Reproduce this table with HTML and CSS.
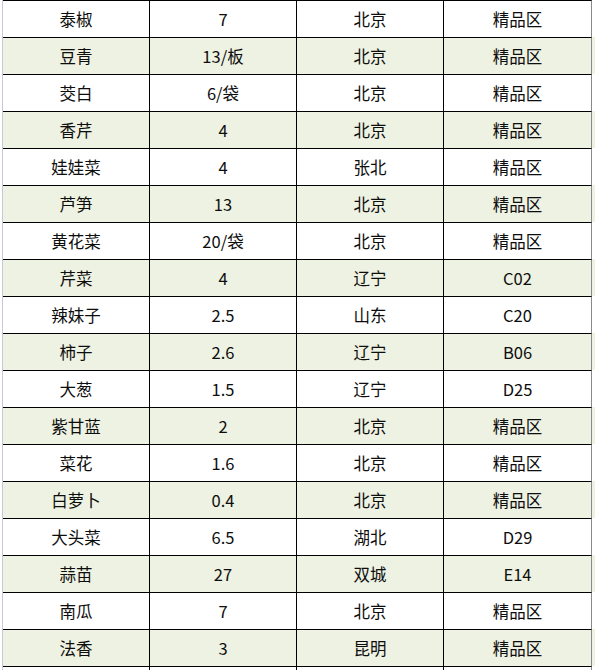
FILE: index.html
```html
<!DOCTYPE html>
<html lang="zh">
<head>
<meta charset="utf-8">
<title>蔬菜价格</title>
<link rel="stylesheet" href="styles.css">
</head>
<body>
<div class="sheet">
  <div class="row"><div class="cell">泰椒</div><div class="cell">7</div><div class="cell">北京</div><div class="cell">精品区</div></div>
  <div class="row alt"><div class="cell">豆青</div><div class="cell">13/板</div><div class="cell">北京</div><div class="cell">精品区</div></div>
  <div class="row"><div class="cell">茭白</div><div class="cell">6/袋</div><div class="cell">北京</div><div class="cell">精品区</div></div>
  <div class="row alt"><div class="cell">香芹</div><div class="cell">4</div><div class="cell">北京</div><div class="cell">精品区</div></div>
  <div class="row"><div class="cell">娃娃菜</div><div class="cell">4</div><div class="cell">张北</div><div class="cell">精品区</div></div>
  <div class="row alt"><div class="cell">芦笋</div><div class="cell">13</div><div class="cell">北京</div><div class="cell">精品区</div></div>
  <div class="row"><div class="cell">黄花菜</div><div class="cell">20/袋</div><div class="cell">北京</div><div class="cell">精品区</div></div>
  <div class="row alt"><div class="cell">芹菜</div><div class="cell">4</div><div class="cell">辽宁</div><div class="cell">C02</div></div>
  <div class="row"><div class="cell">辣妹子</div><div class="cell">2.5</div><div class="cell">山东</div><div class="cell">C20</div></div>
  <div class="row alt"><div class="cell">柿子</div><div class="cell">2.6</div><div class="cell">辽宁</div><div class="cell">B06</div></div>
  <div class="row"><div class="cell">大葱</div><div class="cell">1.5</div><div class="cell">辽宁</div><div class="cell">D25</div></div>
  <div class="row alt"><div class="cell">紫甘蓝</div><div class="cell">2</div><div class="cell">北京</div><div class="cell">精品区</div></div>
  <div class="row"><div class="cell">菜花</div><div class="cell">1.6</div><div class="cell">北京</div><div class="cell">精品区</div></div>
  <div class="row alt"><div class="cell">白萝卜</div><div class="cell">0.4</div><div class="cell">北京</div><div class="cell">精品区</div></div>
  <div class="row"><div class="cell">大头菜</div><div class="cell">6.5</div><div class="cell">湖北</div><div class="cell">D29</div></div>
  <div class="row alt"><div class="cell">蒜苗</div><div class="cell">27</div><div class="cell">双城</div><div class="cell">E14</div></div>
  <div class="row"><div class="cell">南瓜</div><div class="cell">7</div><div class="cell">北京</div><div class="cell">精品区</div></div>
  <div class="row alt"><div class="cell">法香</div><div class="cell">3</div><div class="cell">昆明</div><div class="cell">精品区</div></div>
  <div class="row"><div class="cell"></div><div class="cell"></div><div class="cell"></div><div class="cell"></div></div>
</div>
</body>
</html>
```

FILE: styles.css
```css
html, body {
  margin: 0;
  padding: 0;
  background: #ffffff;
  overflow: hidden;
}

body {
  width: 595px;
  height: 670px;
  font-family: "Noto Sans CJK SC", "Noto Sans", sans-serif;
  font-size: 16.5px;
  color: #0d0d0d;
}

.sheet {
  margin-left: 2px;
  border-left: 1px solid #c6c9d8;
  width: 592px;
  display: flex;
  flex-direction: column;
}

.row {
  display: flex;
  background: #ffffff;
}

.row.alt {
  background: #eef2e2;
}

.cell {
  box-sizing: border-box;
  width: 147px;
  height: 37px;
  border-top: 1px solid #000000;
  border-right: 1px solid #000000;
  display: flex;
  align-items: center;
  justify-content: center;
  line-height: 1;
  flex: none;
}

.cell:last-child {
  width: 148px;
  border-right-color: #8a8a8a;
}
```
